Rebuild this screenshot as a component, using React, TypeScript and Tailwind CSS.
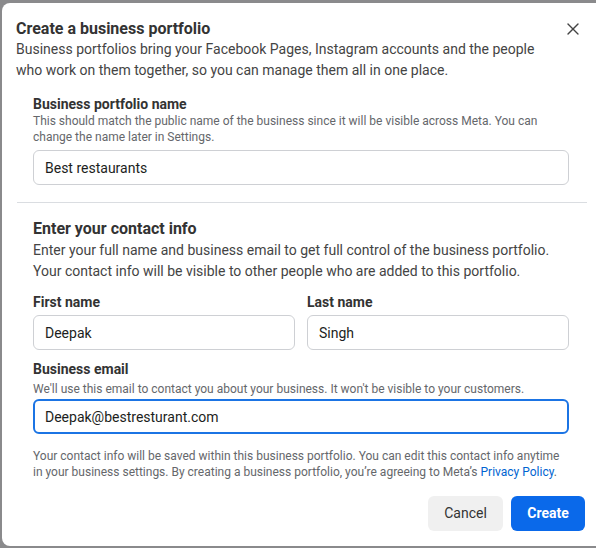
import { X } from "lucide-react";

const inputCls =
  "w-full h-[35px] rounded-md border border-[#ced0d4] bg-white px-[11px] text-[14px] text-[#1c1e21] outline-none";

export default function App() {
  return (
    <div
      className="w-[596px] h-[548px] overflow-hidden bg-[#8a8a8c] pl-[2px] pt-[3px]"
      style={{ fontFamily: "Roboto, 'Liberation Sans', sans-serif" }}
    >
      <div className="w-[610px] h-[543px] rounded-l-lg bg-white pt-[16px] text-[#1c1e21]">
        {/* Header */}
        <div className="flex items-start justify-between pl-[14px] pr-[29px]">
          <div>
            <h2 className="text-[16px] font-bold leading-[20px] text-[#333]">Create a business portfolio</h2>
            <p className="text-[14px] leading-[21px] text-[#444]">
              Business portfolios bring your Facebook Pages, Instagram accounts and the people
              <br />
              who work on them together, so you can manage them all in one place.
            </p>
          </div>
          <button className="text-[#444]">
            <X size={20} strokeWidth={1.6} />
          </button>
        </div>

        {/* Portfolio name */}
        <div className="pl-[31px] pr-[43px] pt-[14px]">
          <label className="block text-[14px] font-bold leading-[18px] text-[#333]">Business portfolio name</label>
          <p className="text-[12px] leading-[16px] text-[#65676b]">
            This should match the public name of the business since it will be visible across Meta. You can
            <br />
            change the name later in Settings.
          </p>
          <div className="mt-[5px]">
            <input className={inputCls} defaultValue="Best restaurants" />
          </div>
        </div>

        <div className="ml-[15px] mr-[25px] mt-[17px] border-t border-[#dadde1]" />

        {/* Contact info */}
        <div className="pl-[31px] pr-[43px] pt-[15px]">
          <h3 className="text-[16px] font-bold leading-[22px] text-[#333]">Enter your contact info</h3>
          <p className="text-[14px] leading-[21px] text-[#444]">
            Enter your full name and business email to get full control of the business portfolio.
            <br />
            Your contact info will be visible to other people who are added to this portfolio.
          </p>

          <div className="mt-[11px] grid grid-cols-2 gap-x-[12px]">
            <div>
              <label className="block text-[14px] font-bold leading-[18px] text-[#333]">First name</label>
              <div className="mt-[4px]">
                <input className={inputCls} defaultValue="Deepak" />
              </div>
            </div>
            <div>
              <label className="block text-[14px] font-bold leading-[18px] text-[#333]">Last name</label>
              <div className="mt-[4px]">
                <input className={inputCls} defaultValue="Singh" />
              </div>
            </div>
          </div>

          <div className="mt-[10px]">
            <label className="block text-[14px] font-bold leading-[18px] text-[#333]">Business email</label>
            <p className="mt-[3px] text-[12px] leading-[16px] text-[#65676b]">
              We'll use this email to contact you about your business. It won't be visible to your customers.
            </p>
            <div className="mt-[2px]">
              <input
                className="w-full h-[35px] rounded-md border-2 border-[#1b74e4] bg-white px-[10px] text-[14px] text-[#1c1e21] outline-none"
                defaultValue="Deepak@bestresturant.com"
              />
            </div>
          </div>

          <p className="mt-[14px] text-[12px] leading-[16px] text-[#65676b]">
            Your contact info will be saved within this business portfolio. You can edit this contact info anytime
            <br />
            in your business settings. By creating a business portfolio, you’re agreeing to Meta’s{" "}
            <a className="text-[#0064d1]">Privacy Policy</a>.
          </p>
        </div>

        {/* Footer */}
        <div className="flex justify-end gap-[8px] pr-[27px] pt-[16px]">
          <button className="h-[35px] w-[75px] rounded-md bg-[#f0f0f0] text-[14px] text-[#333]">Cancel</button>
          <button className="h-[35px] w-[74px] rounded-md bg-[#0a69ea] text-[14px] font-bold text-white">Create</button>
        </div>
      </div>
    </div>
  );
}
